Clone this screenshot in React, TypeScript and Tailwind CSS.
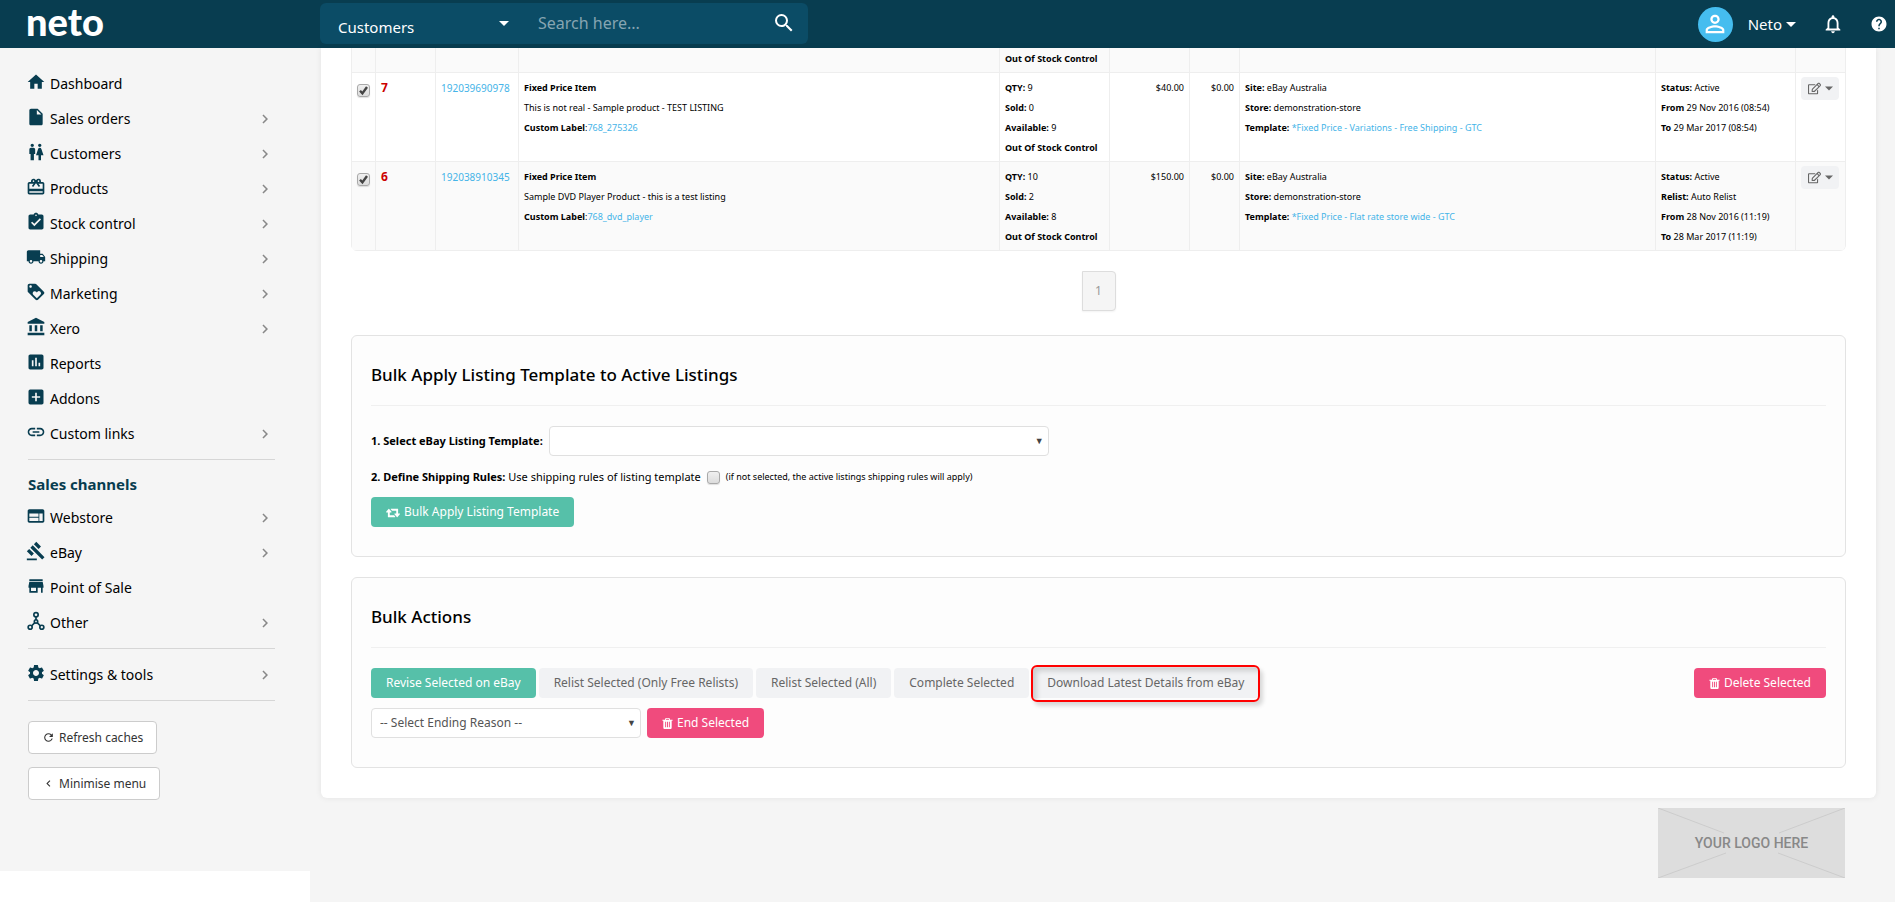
import type { ReactNode } from "react";
import type { IconType } from "react-icons";
import {
  MdAccountBalance,
  MdAddBox,
  MdAssessment,
  MdAssignmentTurnedIn,
  MdCardGiftcard,
  MdChevronLeft,
  MdChevronRight,
  MdGavel,
  MdHelp,
  MdHome,
  MdInsertDriveFile,
  MdLink,
  MdLocalShipping,
  MdLoyalty,
  MdNotificationsNone,
  MdPermIdentity,
  MdRefresh,
  MdSearch,
  MdSettings,
  MdStore,
  MdWc,
  MdWeb,
} from "react-icons/md";
import { FaRegEdit } from "react-icons/fa";

type NavItem = { label: string; icon: IconType; sub?: boolean };

const HubIcon: IconType = ({ size = 20, className }) => (
  <svg width={size} height={size} viewBox="0 0 24 24" fill="none" stroke="currentColor" strokeWidth="2" className={className}>
    <circle cx="12" cy="4.5" r="2.6" />
    <circle cx="12" cy="12.5" r="2" />
    <circle cx="5" cy="19.5" r="2.4" />
    <circle cx="19" cy="19.5" r="2.4" />
    <path d="M12 7v4M10.6 14l-4 4M13.4 14l4 4" />
  </svg>
);

const mainNav: NavItem[] = [
  { label: "Dashboard", icon: MdHome },
  { label: "Sales orders", icon: MdInsertDriveFile, sub: true },
  { label: "Customers", icon: MdWc, sub: true },
  { label: "Products", icon: MdCardGiftcard, sub: true },
  { label: "Stock control", icon: MdAssignmentTurnedIn, sub: true },
  { label: "Shipping", icon: MdLocalShipping, sub: true },
  { label: "Marketing", icon: MdLoyalty, sub: true },
  { label: "Xero", icon: MdAccountBalance, sub: true },
  { label: "Reports", icon: MdAssessment },
  { label: "Addons", icon: MdAddBox },
  { label: "Custom links", icon: MdLink, sub: true },
];

const channelNav: NavItem[] = [
  { label: "Webstore", icon: MdWeb, sub: true },
  { label: "eBay", icon: MdGavel, sub: true },
  { label: "Point of Sale", icon: MdStore },
  { label: "Other", icon: HubIcon, sub: true },
];

const listings = [
  {
    id: "192039690978",
    days: 7,
    title: "This is not real - Sample product - TEST LISTING",
    sku: "768_275326",
    qty: 9,
    sold: 0,
    available: 9,
    price: "$40.00",
    template: "*Fixed Price - Variations - Free Shipping - GTC",
    relist: "",
    from: "29 Nov 2016 (08:54)",
    to: "29 Mar 2017 (08:54)",
  },
  {
    id: "192038910345",
    days: 6,
    title: "Sample DVD Player Product - this is a test listing",
    sku: "768_dvd_player",
    qty: 10,
    sold: 2,
    available: 8,
    price: "$150.00",
    template: "*Fixed Price - Flat rate store wide - GTC",
    relist: "Auto Relist",
    from: "28 Nov 2016 (11:19)",
    to: "28 Mar 2017 (11:19)",
  },
];

function Caret({ className = "w-[10px]" }: { className?: string }) {
  return (
    <svg viewBox="0 0 10 5" className={`h-[5px] fill-current ${className}`}>
      <path d="M0 0h10L5 5z" />
    </svg>
  );
}

function TrashIcon() {
  return (
    <svg viewBox="192 0 1408 1792" className="h-[13px] w-[11px] fill-current">
      <path d="M704 1376v-704q0-14-9-23t-23-9h-64q-14 0-23 9t-9 23v704q0 14 9 23t23 9h64q14 0 23-9t9-23zm256 0v-704q0-14-9-23t-23-9h-64q-14 0-23 9t-9 23v704q0 14 9 23t23 9h64q14 0 23-9t9-23zm256 0v-704q0-14-9-23t-23-9h-64q-14 0-23 9t-9 23v704q0 14 9 23t23 9h64q14 0 23-9t9-23zm-544-992h448l-48-117q-7-9-17-11h-317q-10 2-17 11zm928 32v64q0 14-9 23t-23 9h-96v948q0 83-47 143.5t-113 60.5h-832q-66 0-113-58.5t-47-141.5v-952h-96q-14 0-23-9t-9-23v-64q0-14 9-23t23-9h309l70-167q15-37 54-63t79-26h320q40 0 79 26t54 63l70 167h309q14 0 23 9t9 23z" />
    </svg>
  );
}

function RetweetIcon() {
  return (
    <svg viewBox="0 0 1920 1792" className="h-[13px] w-[14px] fill-current">
      <path d="M1280 1504q0 13-9.5 22.5t-22.5 9.5h-960q-8 0-13.5-2t-9-7-5.5-8-3-11.5-1-11.5v-600h-192q-26 0-45-19t-19-45q0-24 15-41l320-384q19-22 49-22t49 22l320 384q15 17 15 41 0 26-19 45t-45 19h-192v384h576q16 0 25 11l160 192q7 10 7 21zm640-416q0 24-15 41l-320 384q-20 23-49 23t-49-23l-320-384q-15-17-15-41 0-26 19-45t45-19h192v-384h-576q-16 0-25-12l-160-192q-7-9-7-20 0-13 9.5-22.5t22.5-9.5h960q8 0 13.5 2t9 7 5.5 8 3 11.5 1 11.5v600h192q26 0 45 19t19 45z" />
    </svg>
  );
}

function CheckBox({ id, label, checked }: { id: string; label?: string; checked?: boolean }) {
  return (
    <span className="relative inline-block size-[13px] shrink-0 align-middle">
      <input
        id={id}
        type="checkbox"
        aria-label={label}
        defaultChecked={checked}
        className="peer block size-[13px] appearance-none rounded-[3px] border border-[#a9a9a9] bg-linear-to-b from-[#f0f0f0] to-[#dcdcdc] shadow-[0_1px_1px_rgba(0,0,0,0.12)]"
      />
      <svg viewBox="0 0 13 13" className="pointer-events-none absolute inset-0 hidden fill-none stroke-[#444] stroke-[2.4] peer-checked:block">
        <path d="M3 6.8l2.4 2.6L10 3" />
      </svg>
    </span>
  );
}

function NavLink({ item }: { item: NavItem }) {
  const Icon = item.icon;
  return (
    <li>
      <a href="#" className="flex h-[35px] items-center gap-1 text-black">
        <Icon size={20} className="mb-[3px] -ml-0.5 shrink-0 text-[#083d50]" />
        <span className="flex-1 text-[14px]">{item.label}</span>
        {item.sub && <MdChevronRight size={18} className="mr-px text-[#888]" />}
      </a>
    </li>
  );
}

function Header() {
  return (
    <header className="flex h-12 items-center bg-[#083d50] text-white">
      <a href="#" className="w-[320px] shrink-0 pb-1.5 pl-[26px] font-[Lato] text-[38px] leading-10 font-black">
        neto
      </a>
      <form className="-mt-0.5 flex h-[41px] w-[488px] items-center rounded-md bg-[#0b4c66]">
        <div className="relative flex items-center">
          <select aria-label="Search in" className="h-[41px] w-[203px] appearance-none pt-2 pl-[18px] text-[15px] outline-none">
            <option>Customers</option>
          </select>
          <Caret className="pointer-events-none absolute right-[14px] w-[10px]" />
        </div>
        <input
          type="text"
          aria-label="Search"
          placeholder="Search here..."
          className="h-[41px] min-w-0 flex-1 pl-[15px] text-[16px] outline-none placeholder:text-[#86a5b2]"
        />
        <button type="button" aria-label="Search" className="mr-3">
          <MdSearch size={24} />
        </button>
      </form>
      <div className="ml-auto flex items-center pr-[7px]">
        <span className="flex size-[35px] items-center justify-center rounded-full bg-[#45bdef]">
          <MdPermIdentity size={28} />
        </span>
        <button type="button" className="ml-[15px] flex items-center gap-1 text-[15px]">
          Neto
          <Caret />
        </button>
        <button type="button" aria-label="Notifications" className="ml-[26px]">
          <MdNotificationsNone size={22} />
        </button>
        <button type="button" aria-label="Help" className="ml-[26px]">
          <MdHelp size={18} />
        </button>
      </div>
    </header>
  );
}

function Sidebar() {
  return (
    <aside className="h-[823px] bg-[#f5f5f5] pt-[18px] pr-[35px] pl-7">
      <nav>
        <ul>
          {mainNav.map((item) => (
            <NavLink key={item.label} item={item} />
          ))}
        </ul>
        <hr className="mt-2 border-[#d6d6d6]" />
        <h2 className="mt-[14px] mb-[6px] text-[15px] leading-5 font-bold text-[#083d50]">Sales channels</h2>
        <ul>
          {channelNav.map((item) => (
            <NavLink key={item.label} item={item} />
          ))}
        </ul>
        <hr className="my-2 border-[#d6d6d6]" />
        <ul>
          <NavLink item={{ label: "Settings & tools", icon: MdSettings, sub: true }} />
        </ul>
        <hr className="mt-2 border-[#d6d6d6]" />
      </nav>
      <div className="mt-5 flex flex-col items-start gap-[13px] text-[12px] text-[#333]">
        <button type="button" className="flex h-[33px] items-center gap-1 rounded border border-[#ccc] bg-white px-[13px]">
          <MdRefresh size={13} />
          Refresh caches
        </button>
        <button type="button" className="flex h-[33px] items-center gap-1 rounded border border-[#ccc] bg-white px-[13px]">
          <MdChevronLeft size={13} />
          Minimise menu
        </button>
      </div>
    </aside>
  );
}

function Td({ className = "pt-[5px]", children }: { className?: string; children?: ReactNode }) {
  return <td className={`border-b border-l border-[#eee] px-[5px] pb-[3px] align-top ${className}`}>{children}</td>;
}

function ListingTable() {
  return (
    <div className="overflow-hidden rounded-b-md border-r border-[#eee]">
      <table className="w-full table-fixed border-separate border-spacing-0 text-[9px] leading-5 text-black">
        <colgroup>
          <col className="w-6" />
          <col className="w-[60px]" />
          <col className="w-[83px]" />
          <col />
          <col className="w-[110px]" />
          <col className="w-[80px]" />
          <col className="w-[50px]" />
          <col className="w-[416px]" />
          <col className="w-[140px]" />
          <col className="w-[50px]" />
        </colgroup>
        <tbody>
          <tr className="bg-[#fafafa]">
            <Td />
            <Td />
            <Td />
            <Td />
            <Td className="pt-px">
              <b>Out Of Stock Control</b>
            </Td>
            <Td />
            <Td />
            <Td />
            <Td />
            <Td />
          </tr>
          {listings.map((row) => (
            <tr key={row.id} className="odd:bg-[#fafafa] even:bg-white">
              <Td className="pt-[7px] text-center">
                <CheckBox id={`pick-${row.id}`} label={`Select ${row.id}`} checked />
              </Td>
              <Td className="pt-[5px] text-[12px] font-bold text-[#c00]">{row.days}</Td>
              <Td className="pt-[5px] text-[10px]">
                <a href="#" className="text-[#45b4e8]">{row.id}</a>
              </Td>
              <Td>
                <b>Fixed Price Item</b>
                <p>{row.title}</p>
                <b>Custom Label</b>:<a href="#" className="text-[#45b4e8]">{row.sku}</a>
              </Td>
              <Td>
                <p><b>QTY:</b> {row.qty}</p>
                <p><b>Sold:</b> {row.sold}</p>
                <p><b>Available:</b> {row.available}</p>
                <p><b>Out Of Stock Control</b></p>
              </Td>
              <Td className="pt-[5px] text-right">{row.price}</Td>
              <Td className="pt-[5px] text-right">$0.00</Td>
              <Td>
                <p><b>Site:</b> eBay Australia</p>
                <p><b>Store:</b> demonstration-store</p>
                <p><b>Template:</b> <a href="#" className="text-[#45b4e8]">{row.template}</a></p>
              </Td>
              <Td>
                <p><b>Status:</b> Active</p>
                {row.relist && <p><b>Relist:</b> {row.relist}</p>}
                <p><b>From</b> {row.from}</p>
                <p><b>To</b> {row.to}</p>
              </Td>
              <Td className="pt-1">
                <button type="button" aria-label="Edit listing" className="flex h-[23px] w-[38px] items-center justify-center gap-1 rounded bg-[#f1f2f4] text-[#666]">
                  <FaRegEdit size={13} />
                  <Caret className="w-2" />
                </button>
              </Td>
            </tr>
          ))}
        </tbody>
      </table>
    </div>
  );
}

function Panel({ title, children }: { title: string; children: ReactNode }) {
  return (
    <section className="rounded-md border border-[#e3e3e3] bg-[#fdfdfd] px-[19px] pt-[25px] pb-[29px]">
      <h3 className="border-b border-[#f0f0f0] pb-4 text-[17px] leading-7 font-medium text-black">{title}</h3>
      <div className="mt-5">{children}</div>
    </section>
  );
}

const btn = "flex h-[30px] items-center gap-1 rounded px-[15px] text-[12px] whitespace-nowrap";

export default function App() {
  return (
    <div className="min-h-screen bg-[#f5f5f5] font-['Noto_Sans',sans-serif]">
      <Header />
      <div className="flex">
        <div className="flex w-[310px] shrink-0 flex-col bg-white">
          <Sidebar />
        </div>
        <main className="min-w-0 flex-1 pr-[19px] pb-6 pl-[11px]">
          <div className="rounded-b-md bg-white px-[30px] pb-[30px] shadow-[0_0_6px_rgba(0,0,0,0.08)]">
            <ListingTable />
            <div className="mt-5 flex justify-center">
              <button type="button" className="h-10 w-[34px] rounded-r border border-[#ddd] bg-[#f5f5f5] text-[12px] text-[#999] shadow-xs">
                1
              </button>
            </div>
            <div className="mt-6 flex flex-col gap-5">
              <Panel title="Bulk Apply Listing Template to Active Listings">
                <div className="flex items-center gap-[6px] text-[11px] text-black">
                  <label htmlFor="template" className="font-bold">1. Select eBay Listing Template:</label>
                  <div className="relative w-[500px]">
                    <select id="template" className="block h-[30px] w-full appearance-none rounded border border-[#e0e0e0] bg-white px-2">
                      <option></option>
                    </select>
                    <span className="pointer-events-none absolute top-[7px] right-[5px] text-[9px] leading-4 text-[#444]">▼</span>
                  </div>
                </div>
                <div className="mt-[11px] flex h-5 items-center gap-[6px] text-[11px] text-black">
                  <label htmlFor="rules"><b>2. Define Shipping Rules:</b> Use shipping rules of listing template</label>
                  <CheckBox id="rules" />
                  <span className="text-[9px]">(if not selected, the active listings shipping rules will apply)</span>
                </div>
                <button type="button" className={`${btn} mt-[10px] bg-[#56c0a9] text-white`}>
                  <RetweetIcon />
                  Bulk Apply Listing Template
                </button>
              </Panel>
              <Panel title="Bulk Actions">
                <div className="flex items-center gap-[3px] text-[#666]">
                  <button type="button" className={`${btn} bg-[#56c0a9] text-white`}>Revise Selected on eBay</button>
                  <button type="button" className={`${btn} bg-[#f1f2f4]`}>Relist Selected (Only Free Relists)</button>
                  <button type="button" className={`${btn} bg-[#f1f2f4]`}>Relist Selected (All)</button>
                  <button type="button" className={`${btn} bg-[#f1f2f4]`}>Complete Selected</button>
                  <div className="relative">
                    <button type="button" className={`${btn} bg-[#f1f2f4]`}>Download Latest Details from eBay</button>
                    <span className="pointer-events-none absolute -inset-x-px -top-[3px] -bottom-1 rounded-md border-2 border-[#f00] shadow-[3px_4px_4px_rgba(0,0,0,0.15),inset_4px_4px_5px_rgba(0,0,0,0.15)]" />
                  </div>
                  <button type="button" className={`${btn} ml-auto bg-[#f04b7d] text-white`}>
                    <TrashIcon />
                    Delete Selected
                  </button>
                </div>
                <div className="mt-[10px] flex items-center gap-[6px]">
                  <div className="relative w-[270px]">
                    <select aria-label="Ending reason" className="block h-[30px] w-full appearance-none rounded border border-[#e0e0e0] bg-white px-2 text-[12px] text-[#555]">
                      <option>-- Select Ending Reason --</option>
                    </select>
                    <span className="pointer-events-none absolute top-[7px] right-[5px] text-[9px] leading-4 text-[#444]">▼</span>
                  </div>
                  <button type="button" className={`${btn} bg-[#f04b7d] text-white`}>
                    <TrashIcon />
                    End Selected
                  </button>
                </div>
              </Panel>
            </div>
          </div>
          <footer className="mt-[10px] flex justify-end pr-[31px]">
            <div className="relative flex h-[70px] w-[187px] items-center justify-center bg-[#ddd] font-[Roboto] text-[14px] font-medium text-[#888]">
              <svg viewBox="0 0 187 70" className="absolute inset-0 stroke-[#ccc]">
                <path d="M0 0l66 25M187 0l-66 25M0 70l68-25M187 70l-67-25" />
              </svg>
              YOUR LOGO HERE
            </div>
          </footer>
        </main>
      </div>
    </div>
  );
}
